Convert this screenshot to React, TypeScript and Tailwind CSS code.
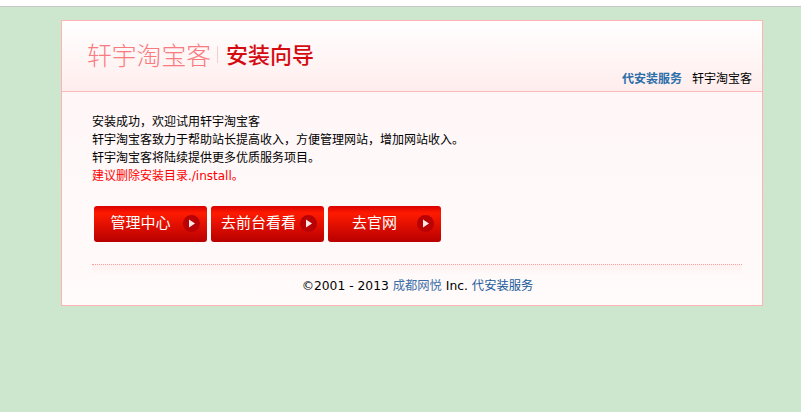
const cjk = "font-['Tahoma','DejaVu_Sans','Noto_Sans_CJK_SC',sans-serif]";

const buttons = [
    { label: "管理中心", pr: "pr-[20px]" },
    { label: "去前台看看", pr: "pr-[18px]" },
    { label: "去官网", pr: "pr-[20px]" },
];

const PlayIcon = () => (
    <svg width="17" height="17" viewBox="0 0 17 17" className="absolute right-[7px] top-[9px]">
        <circle cx="8.5" cy="8.5" r="8.5" fill="#b80005" />
        <path d="M6 4.5 L12 8.5 L6 12.5 Z" fill="#fde8e8" />
    </svg>
);

const App = () => {
    return (
        <div className={`min-h-[412px] bg-[#cde7ce] ${cjk}`}>
            {/* top strip */}
            <div className="h-[7px] bg-white border-b border-[#c8c8c8]"></div>
            <div className="pt-[13px] pl-[61px]">
                <div className="w-[702px] h-[286px] border border-[#ffb3b3] bg-gradient-to-b from-[#fff5f6] to-[#fffbfa]">
                    {/* header */}
                    <div className="h-[71px] flex justify-between border-b border-[#ffb9b9] bg-gradient-to-b from-white to-[#ffeded]">
                        <div className="flex items-center pl-[25px] pb-[3px]">
                            <span className="text-[24.8px] leading-none font-light text-[#f97b7f] font-['Noto_Sans_CJK_SC',sans-serif]">轩宇淘宝客</span>
                            <span className="ml-[6px] mr-[8px] w-px h-[17px] bg-[#f6cccc]"></span>
                            <span className="mb-[3px] text-[22px] leading-none font-medium text-[#d40c12] font-['Noto_Sans_CJK_SC',sans-serif]">安装向导</span>
                        </div>
                        <div className="flex items-end gap-[10px] pr-[10px] pb-[4px] text-[12px] leading-[16px]">
                            <a className="font-bold text-[#2b6ea8]">代安装服务</a>
                            <span className="text-black">轩宇淘宝客</span>
                        </div>
                    </div>
                    {/* message */}
                    <div className="pt-[21px] pl-[30px] text-[12px] leading-[18px] text-black">
                        <p>安装成功，欢迎试用轩宇淘宝客</p>
                        <p>轩宇淘宝客致力于帮助站长提高收入，方便管理网站，增加网站收入。</p>
                        <p>轩宇淘宝客将陆续提供更多优质服务项目。</p>
                        <p className="text-[#ff0000]">建议删除安装目录./install。</p>
                    </div>
                    {/* buttons */}
                    <div className="flex gap-[4px] pl-[32px] pt-[21px]">
                        {buttons.map((b) => (
                            <a key={b.label} className={`relative w-[113px] h-[36px] pb-[2px] rounded-[3px] flex items-center justify-center text-[15px] text-white bg-gradient-to-b from-[#d80000] from-0% via-[#ff1a00] via-20% to-[#b80000] ${b.pr}`}>
                                {b.label}
                                <PlayIcon />
                            </a>
                        ))}
                    </div>
                    {/* footer */}
                    <div className="mt-[22px] ml-[30px] mr-[20px] border-t border-dotted border-[#ff9c9c]">
                        <div className="h-[10px] bg-gradient-to-b from-[#fff0f0] to-[#fffafa]"></div>
                    </div>
                    <div className="pt-[2px] pl-[11px] text-center text-[12.3px] leading-[18px] text-black">
                        ©2001 - 2013 <a className="text-[#3d6ea8]">成都网悦</a> Inc. <a className="text-[#1a5a9a]">代安装服务</a>
                    </div>
                </div>
            </div>
        </div>
    );
};

export default App;
